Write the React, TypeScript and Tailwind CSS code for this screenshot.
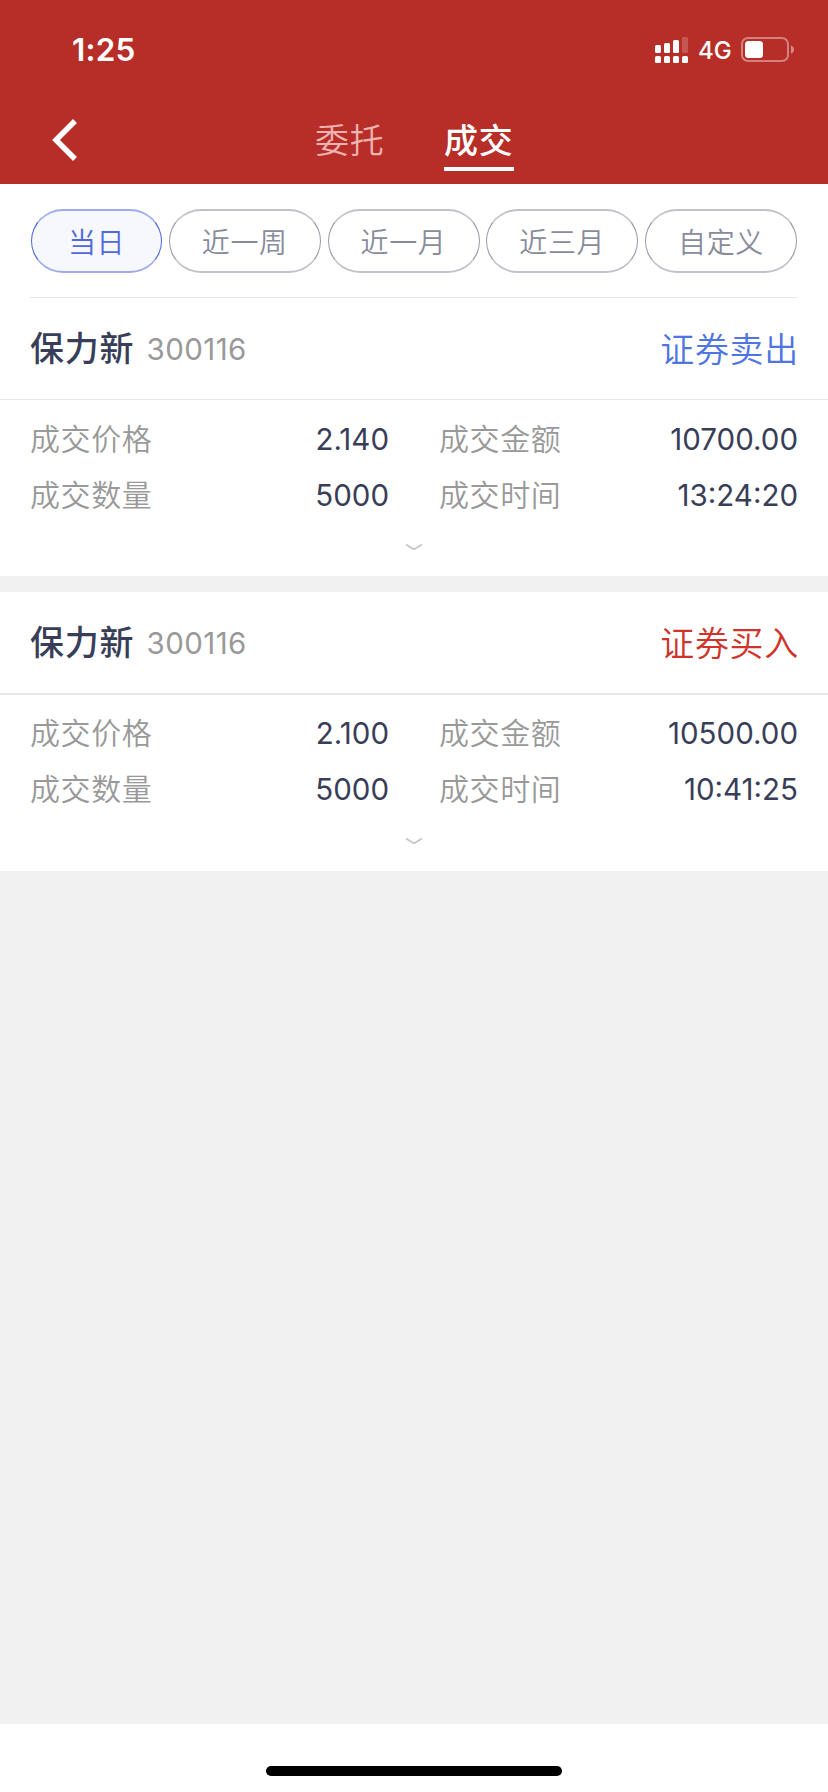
const cjk = "font-['Noto_Sans_CJK_SC',sans-serif]";

const filters = [
  { label: '当日', width: 'w-[131px]', active: true },
  { label: '近一周', width: 'w-[152px]', active: false },
  { label: '近一月', width: 'w-[152px]', active: false },
  { label: '近三月', width: 'w-[152px]', active: false },
  { label: '自定义', width: 'w-[152px]', active: false },
];

type Deal = {
  side: string;
  sideColor: string;
  price: string;
  amount: string;
  count: string;
  time: string;
  headClass: string;
  bodyClass: string;
};

const deals: Deal[] = [
  {
    side: '证券卖出',
    sideColor: 'text-[#4f74e3]',
    price: '2.140',
    amount: '10700.00',
    count: '5000',
    time: '13:24:20',
    headClass: 'h-[102px] border-b border-[#e8e8e8]',
    bodyClass: 'h-[176px] pt-[11px]',
  },
  {
    side: '证券买入',
    sideColor: 'text-[#cf3329]',
    price: '2.100',
    amount: '10500.00',
    count: '5000',
    time: '10:41:25',
    headClass: 'h-[103px] border-b-2 border-[#e8e8e8]',
    bodyClass: 'h-[176px] pt-[10px]',
  },
];

function StatusBar() {
  return (
    <div className="flex h-[100px] items-center justify-between pl-[72px] pr-[33px] text-white">
      <span className="text-[31.5px] leading-[40px] font-semibold tracking-[0.2px]">1:25</span>
      <div className="flex items-center">
        <svg width="34" height="28" viewBox="0 0 34 28" fill="#fff">
          <rect x="0" y="9" width="6" height="8" rx="1.5" />
          <rect x="9" y="7" width="6" height="10" rx="1.5" />
          <rect x="18" y="4" width="6" height="13" rx="1.5" />
          <rect x="27" y="1" width="6" height="16" rx="1.5" opacity="0.2" />
          <rect x="0" y="20" width="6" height="7" rx="1.5" />
          <rect x="9" y="20" width="6" height="7" rx="1.5" />
          <rect x="18" y="20" width="6" height="7" rx="1.5" />
          <rect x="27" y="20" width="6" height="7" rx="1.5" />
        </svg>
        <span className="ml-[9px] mt-[2px] w-[34px] text-[24px] leading-[28px] font-[450]">4G</span>
        <svg className="ml-[9px]" width="54" height="28" viewBox="0 0 54 28">
          <rect x="1" y="2" width="46" height="23" rx="6" fill="none" stroke="#fff" strokeOpacity="0.4" strokeWidth="2" />
          <rect x="4" y="5" width="18" height="17" rx="3.5" fill="#fff" />
          <path d="M50 9.500C52 10 53 12 53 13.500C53 15 52 17 50 17.500Z" fill="#fff" fillOpacity="0.45" />
        </svg>
      </div>
    </div>
  );
}

function Field({ label, value }: { label: string; value: string }) {
  return (
    <div className="flex h-[56px] items-start justify-between">
      <span className={`${cjk} -mt-[2px] text-[30px] leading-[56px] tracking-[0.6px] font-[350] text-[#999]`}>{label}</span>
      <span className="text-[29.5px] leading-[56px] text-[#393e58]">{value}</span>
    </div>
  );
}

function DealCard({ deal }: { deal: Deal }) {
  return (
    <section className="bg-white">
      <div className={`flex items-center justify-between pl-[30px] pr-[29px] ${deal.headClass}`}>
        <div className="flex items-center">
          <span className={`${cjk} pb-[4px] text-[34px] tracking-[0.7px] font-medium text-[#393e58]`}>保力新</span>
          <span className="ml-[12.5px] pt-[2px] text-[29.5px] tracking-[0.4px] text-[#999]">300116</span>
        </div>
        <span className={`${cjk} pb-[3px] text-[34px] tracking-[0.7px] font-[350] ${deal.sideColor}`}>{deal.side}</span>
      </div>
      <div className={deal.bodyClass}>
        <div className="grid grid-cols-[359px_359px] gap-x-[50px] pl-[30px]">
          <Field label="成交价格" value={deal.price} />
          <Field label="成交金额" value={deal.amount} />
          <Field label="成交数量" value={deal.count} />
          <Field label="成交时间" value={deal.time} />
        </div>
        <svg className="mx-auto mt-[19px]" width="18" height="10" viewBox="0 0 18 10" fill="none" stroke="#c4c6cc" strokeWidth="1.8">
          <path d="M1 2.500L7.500 6.500Q9 7.500 10.500 6.500L17 2.500" />
        </svg>
      </div>
    </section>
  );
}

export default function App() {
  return (
    <div className="flex h-[1792px] w-[828px] flex-col overflow-hidden bg-[#f1f1f1] font-['Inter',sans-serif]">
      <header className="h-[184px] shrink-0 bg-[#b72e29]">
        <StatusBar />
        <nav className="flex h-[84px] pl-[52px]">
          <svg className="mt-[19px]" width="26" height="42" viewBox="0 0 26 42" fill="none" stroke="#fff" strokeWidth="5.500">
            <path d="M23 2L4 21L23 40" />
          </svg>
          <div className={`ml-[237px] flex gap-[59px] text-[34px] leading-[50px] ${cjk}`}>
            <span className="mt-[14px] h-[57px] w-[70px] tracking-[0.8px] font-[350] text-[#edb3b0]">委托</span>
            <span className="mt-[14px] h-[57px] w-[70px] border-b-4 border-white tracking-[0.8px] font-medium text-white">成交</span>
          </div>
        </nav>
      </header>
      <div className="shrink-0 bg-white px-[30px]">
        <div className="flex h-[114px] justify-between border-b border-[#e8e8e8] px-px pt-[25px]">
          {filters.map((f) => (
            <button
              key={f.label}
              className={`${cjk} ${f.width} h-[64px] rounded-full border-x border-y-2 text-[28px] leading-[57px] tracking-[0.6px] font-[350] ${
                f.active
                  ? 'border-x-[#4f69dc] border-y-[#9dacee] bg-[#f6f8fd] text-[#4f69dc]'
                  : 'border-x-[#9a9cab] border-y-[#c0c1c9] text-[#888b9b]'
              }`}
            >
              {f.label}
            </button>
          ))}
        </div>
      </div>
      <main className="flex flex-col gap-[16px]">
        {deals.map((d) => (
          <DealCard key={d.side} deal={d} />
        ))}
      </main>
      <footer className="mt-auto flex h-[68px] shrink-0 justify-center bg-white pt-[42px]">
        <div className="h-[10px] w-[296px] rounded-full bg-black" />
      </footer>
    </div>
  );
}
